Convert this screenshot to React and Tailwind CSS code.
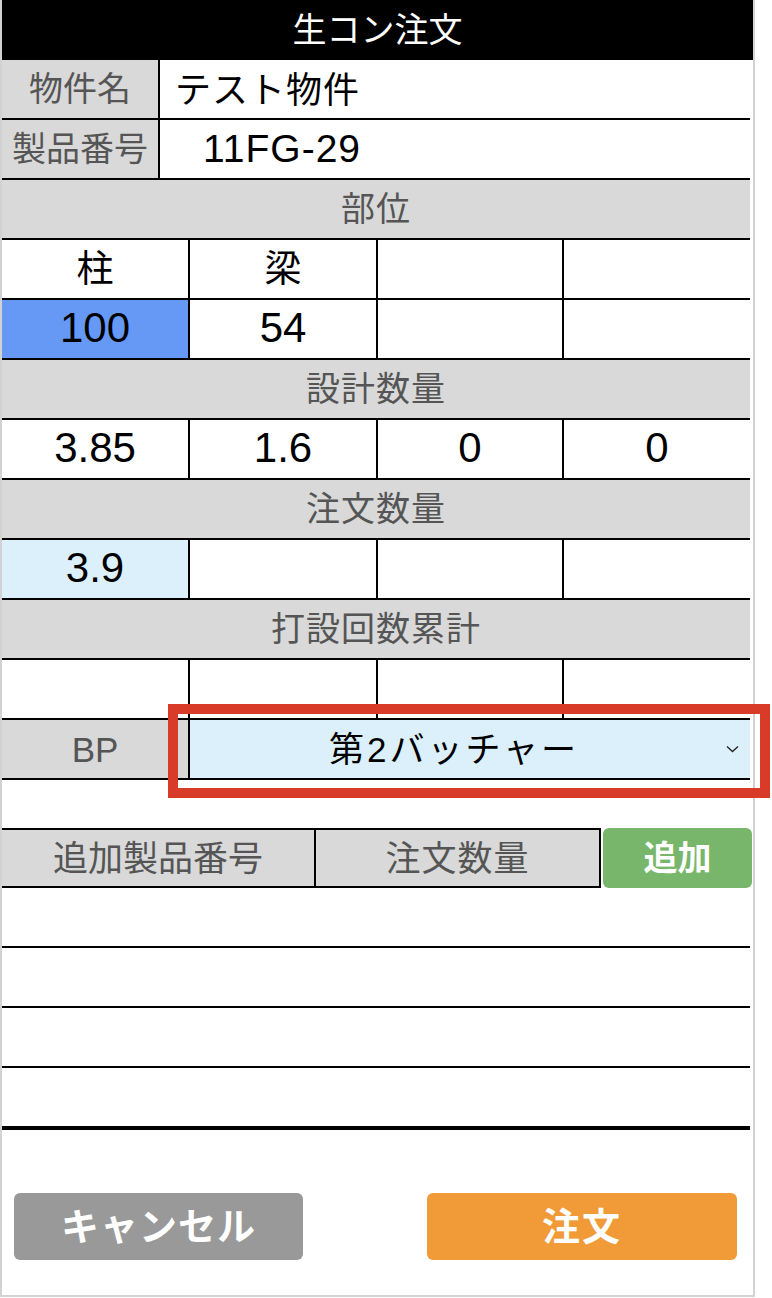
import React from 'react';

const parts = ['柱', '梁', '', ''];
const counts = ['100', '54', '', ''];
const design = ['3.85', '1.6', '0', '0'];
const orders = ['3.9', '', '', ''];
const totals = ['', '', '', ''];

function SectionHead({ children }) {
  return (
    <div className="h-[60px] bg-[#d9d9d9] border-b-2 border-black flex items-center justify-center text-[34px] tracking-[1px] text-[#555]">
      {children}
    </div>
  );
}

function CellRow({ values, first = '', size = 'text-[42px] pb-[3px]' }) {
  return (
    <div className="grid grid-cols-[188px_188px_186px_1fr] h-[60px] border-b-2 border-black">
      {values.map((v, i) => (
        <div
          key={i}
          className={
            'flex items-center justify-center text-black ' +
            size +
            ' ' +
            (i < 3 ? 'border-r-2 border-black ' : '') +
            (i === 0 ? first : '')
          }
        >
          {v}
        </div>
      ))}
    </div>
  );
}

export default function App() {
  return (
    <div className="w-[772px] h-[1298px] bg-white font-['Liberation_Sans','Noto_Sans_CJK_JP',sans-serif] leading-none">
      <div className="w-[755px] h-[1297px] border-x-2 border-b-2 border-[#d2d2d2] flex flex-col">
        {/* title */}
        <div className="h-[60px] bg-black text-white text-[34px] flex items-center justify-center">
          生コン注文
        </div>

        <div className="mr-[3px]">
          {/* header info */}
          <div className="flex h-[60px] border-b-2 border-black">
            <div className="w-[158px] bg-[#d9d9d9] border-r-2 border-black flex items-center justify-center text-[34px] text-[#555]">
              物件名
            </div>
            <div className="flex-1 flex items-center pl-[15px] pt-[4px] text-[36px] tracking-[1px] text-black">テスト物件</div>
          </div>
          <div className="flex h-[60px] border-b-2 border-black">
            <div className="w-[158px] bg-[#d9d9d9] border-r-2 border-black flex items-center justify-center text-[34px] text-[#555]">
              製品番号
            </div>
            <div className="flex-1 flex items-center pl-[43px] pb-[2px] text-[39px] tracking-[1px] text-black">11FG-29</div>
          </div>

          <SectionHead>部位</SectionHead>
          <CellRow values={parts} size="text-[37px]" />
          <CellRow values={counts} first="bg-[#6699f5]" />

          <SectionHead>設計数量</SectionHead>
          <CellRow values={design} />

          <SectionHead>注文数量</SectionHead>
          <CellRow values={orders} first="bg-[#dcf0fc]" />

          <SectionHead>打設回数累計</SectionHead>
          <CellRow values={totals} />

          {/* BP select */}
          <div className="relative flex h-[60px] border-b-2 border-black">
            <div className="w-[188px] bg-[#d9d9d9] border-r-2 border-black flex items-center justify-center text-[35px] text-[#555]">
              BP
            </div>
            <div className="flex-1 bg-[#dcf0fc] flex items-center pl-[139px] pr-[11px] text-[35px] tracking-[3px] text-black">
              <span className="flex-1">第2バッチャー</span>
              <svg width="13" height="8" viewBox="0 0 13 8" fill="none" stroke="#222" strokeWidth="1.3">
                <path d="M1 1.5 L6.5 6.5 L12 1.5" />
              </svg>
            </div>
            <div className="absolute left-[166px] top-[-16px] w-[602px] h-[94px] border-[10px] border-[#d83b27]" />
          </div>

          <div className="h-[48px]" />

          {/* additional products */}
          <div className="flex h-[60px]">
            <div className="w-[314px] shrink-0 bg-[#d9d9d9] border-y-2 border-r-2 border-black flex items-center justify-center text-[35px] text-[#555]">
              追加製品番号
            </div>
            <div className="w-[285px] shrink-0 bg-[#d9d9d9] border-y-2 border-r-2 border-black flex items-center justify-center text-[35px] tracking-[1px] text-[#555]">
              注文数量
            </div>
            <button className="ml-[2px] w-[149px] shrink-0 bg-[#78b76b] rounded-[6px] flex items-center justify-center text-[34px] font-bold text-white">
              追加
            </button>
          </div>
          <div className="h-[60px] border-b-2 border-black" />
          <div className="h-[60px] border-b-2 border-black" />
          <div className="h-[60px] border-b-2 border-black" />
          <div className="h-[62px] border-b-4 border-black" />
        </div>

        {/* actions */}
        <div className="flex justify-between pl-[12px] pr-[16px] mt-[63px]">
          <button className="w-[289px] h-[67px] bg-[#999999] rounded-[6px] text-white text-[38px] font-bold tracking-[1px] flex items-center justify-center">
            キャンセル
          </button>
          <button className="w-[310px] h-[67px] bg-[#f09b38] rounded-[6px] text-white text-[38px] font-bold tracking-[2px] flex items-center justify-center">
            注文
          </button>
        </div>
      </div>
    </div>
  );
}
